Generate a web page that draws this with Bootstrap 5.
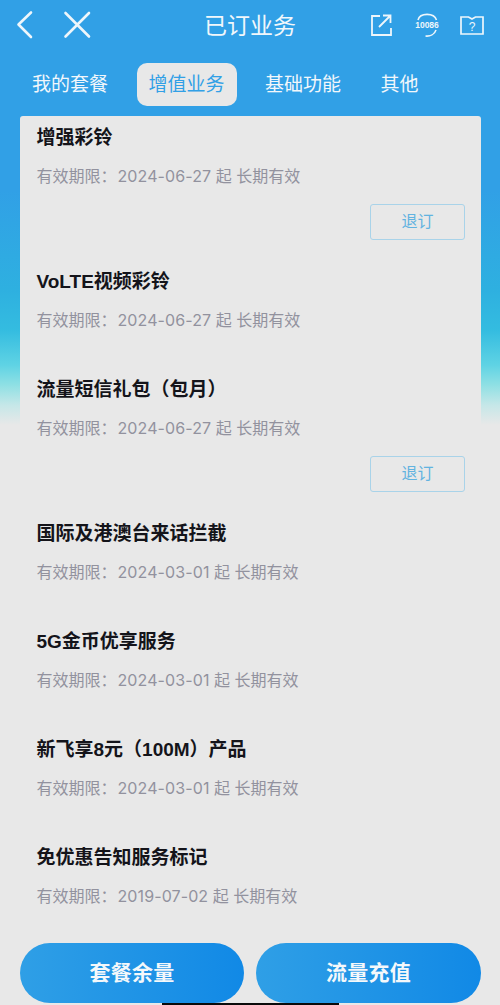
<!DOCTYPE html>
<html lang="zh-CN">
<head>
<meta charset="utf-8">
<title>已订业务</title>
<link href="https://cdn.jsdelivr.net/npm/bootstrap@5.3.0/dist/css/bootstrap.min.css" rel="stylesheet">
<style>
html,body{margin:0;height:1005px;overflow:hidden}
body{font-family:"Liberation Sans","Noto Sans CJK SC",sans-serif;background:linear-gradient(180deg,#31a0e6 0,#31a0e6 190px,#2eb0e0 290px,#34bce0 330px,#5fd3e4 365px,#8fe0e4 385px,#c5e7e8 405px,#e8e8e8 425px);}
.app-shell{position:relative;width:500px;height:1005px;overflow:hidden}
.top-bar{height:50px;padding:0 16px 0 14px}
.top-title{font-size:23px;color:#f1f7fb;left:204px;top:11px;line-height:30px}
.back-ic{margin-right:26px}
.ic-gap-a{margin-left:22px}
.ic-gap-b{margin-left:20px}
.tabs-row{height:66px;padding:13px 0 10px 20px}
.tab-item{font-size:19px;line-height:43px;height:43px;color:#f2f7fb;padding:0 12px;border-radius:10px;margin-right:16.500px}
.tab-item.on{background:#e8e8e8;color:#31a0e6}
.tab-item.tab-third{margin-right:15.500px}
.panel-box{margin:0 19px 0 20px;background:#e8e8e8;border-radius:3px 3px 0 0}
.svc{padding:9px 16px 36px 16.500px}
.svc.has-btn{padding-bottom:20px}
.svc-name{font-size:19px;line-height:26px;font-weight:600;color:#14141a}
.svc-sub{font-family:"Inter","Noto Sans CJK SC",sans-serif;font-size:16px;line-height:24px;color:#92929e;margin-top:13px;white-space:nowrap}
.svc-date{margin-left:1px;letter-spacing:.1px}
.quit-btn{width:95px;height:36px;margin-top:16px;padding:0;font-size:16px;line-height:32px;color:#62b3e0;background:transparent;border:1.500px solid #a9d3e9;border-radius:3px}
.foot-row{padding:0 19px 0 20px;gap:12px;margin-top:-1px}
.foot-btn{flex:1 1 0;height:60px;border:0;border-radius:30px;background:linear-gradient(90deg,#2f9fe6,#1189e6);color:#f4f8fb;font-size:21px;font-weight:600;letter-spacing:.3px}
.foot-btn:first-child{flex:0 0 224px}
.home-bar{position:absolute;left:162px;bottom:0;width:177px;height:2px;background:#0a0a0a}
</style>
</head>
<body>
<div class="app-shell">
  <div class="top-bar d-flex align-items-center position-relative">
    <svg class="back-ic" width="22" height="30" viewBox="0 0 22 30" fill="none" stroke="#eef6fb" stroke-width="2.600" stroke-linecap="round" stroke-linejoin="round"><path d="M17 2.500 4.500 14.500 17 27"/></svg>
    <svg width="30" height="30" viewBox="0 0 30 30" fill="none" stroke="#eef6fb" stroke-width="2.600" stroke-linecap="round"><path d="M3.500 3 27 26.500M27 3 3.500 26.500"/></svg>
    <div class="top-title position-absolute">已订业务</div>
    <div class="ms-auto d-flex align-items-center">
      <svg width="22" height="22" viewBox="0 0 22 22" fill="none" stroke="#eef6fb" stroke-width="1.800"><path d="M10 2H2v19h19v-7M9 13 20 2M13 1.500h7.500V9"/></svg>
      <svg class="ic-gap-a" width="26" height="26" viewBox="0 0 26 26" fill="none" stroke="#eef6fb" stroke-width="1.600"><path d="M4 8C6 .500 20 .500 22.500 8M22 18C20.500 22.500 16 24.500 11.500 24"/><text x="13" y="16" fill="#eef6fb" stroke="none" font-family="Liberation Sans" font-size="8.500" font-weight="700" text-anchor="middle">10086</text></svg>
      <svg class="ic-gap-b" width="24" height="20" viewBox="0 0 24 20" fill="none" stroke="#eef6fb" stroke-width="1.700"><path d="M1 2h7.500l3.500 2 3.500-2H23v17H1z"/><text x="12" y="15.500" fill="#eef6fb" stroke="none" font-family="Liberation Sans" font-size="12" text-anchor="middle">?</text></svg>
    </div>
  </div>
  <div class="tabs-row d-flex">
    <div class="tab-item">我的套餐</div>
    <div class="tab-item on">增值业务</div>
    <div class="tab-item tab-third">基础功能</div>
    <div class="tab-item">其他</div>
  </div>
  <div class="panel-box">
    <div class="svc has-btn">
      <div class="svc-name">增强彩铃</div>
      <div class="svc-sub">有效期限：<span class="svc-date">2024-06-27</span> 起 长期有效</div>
      <div class="d-flex justify-content-end"><button class="btn quit-btn" type="button">退订</button></div>
    </div>
    <div class="svc">
      <div class="svc-name">VoLTE视频彩铃</div>
      <div class="svc-sub">有效期限：<span class="svc-date">2024-06-27</span> 起 长期有效</div>
    </div>
    <div class="svc has-btn">
      <div class="svc-name">流量短信礼包（包月）</div>
      <div class="svc-sub">有效期限：<span class="svc-date">2024-06-27</span> 起 长期有效</div>
      <div class="d-flex justify-content-end"><button class="btn quit-btn" type="button">退订</button></div>
    </div>
    <div class="svc">
      <div class="svc-name">国际及港澳台来话拦截</div>
      <div class="svc-sub">有效期限：<span class="svc-date">2024-03-01</span> 起 长期有效</div>
    </div>
    <div class="svc">
      <div class="svc-name">5G金币优享服务</div>
      <div class="svc-sub">有效期限：<span class="svc-date">2024-03-01</span> 起 长期有效</div>
    </div>
    <div class="svc">
      <div class="svc-name">新飞享8元（100M）产品</div>
      <div class="svc-sub">有效期限：<span class="svc-date">2024-03-01</span> 起 长期有效</div>
    </div>
    <div class="svc">
      <div class="svc-name">免优惠告知服务标记</div>
      <div class="svc-sub">有效期限：<span class="svc-date">2019-07-02</span> 起 长期有效</div>
    </div>
  </div>
  <div class="foot-row d-flex">
    <button class="foot-btn" type="button">套餐余量</button>
    <button class="foot-btn" type="button">流量充值</button>
  </div>
  <div class="home-bar"></div>
</div>
<script src="https://cdn.jsdelivr.net/npm/bootstrap@5.3.0/dist/js/bootstrap.bundle.min.js"></script>
</body>
</html>
